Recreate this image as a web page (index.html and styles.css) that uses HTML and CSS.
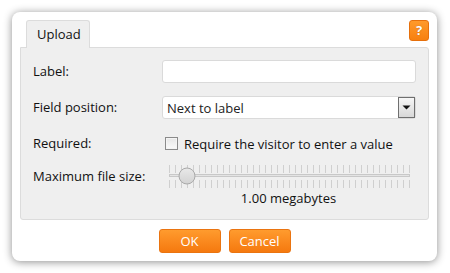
FILE: index.html
```html
<!DOCTYPE html>
<html>
<head>
<meta charset="utf-8">
<link rel="stylesheet" href="styles.css">
</head>
<body>
<div class="dialog">
  <div class="tabbar">
    <div class="tab">Upload</div>
    <div class="help">?</div>
  </div>
  <div class="panel">
    <div class="row r1">
      <div class="lbl">Label:</div>
      <div class="input"></div>
    </div>
    <div class="row r2">
      <div class="lbl">Field position:</div>
      <div class="select"><span class="sel-text">Next to label</span><span class="sel-btn"><svg width="9" height="5" viewBox="0 0 9 5"><path d="M0.5 0.5h8l-4 4z" fill="#111"/></svg></span></div>
    </div>
    <div class="row r3">
      <div class="lbl">Required:</div>
      <label class="check"><span class="box"></span><span>Require the visitor to enter a value</span></label>
    </div>
    <div class="row r4">
      <div class="lbl">Maximum file size:</div>
      <div class="slider">
        <svg width="250" height="24" viewBox="0 0 250 24">
          <g id="ticks" stroke="#cfcfcf" stroke-width="1"></g>
          <rect x="1.5" y="10.5" width="240" height="2" fill="#e4e4e4" stroke="#c8c8c8" stroke-width="1"/>
          <circle cx="19" cy="12" r="8" fill="url(#tg)" stroke="#a9a9a9" stroke-width="1"/>
          <defs>
            <linearGradient id="tg" x1="0" y1="0" x2="0" y2="1">
              <stop offset="0" stop-color="#e9e9e9"/>
              <stop offset="1" stop-color="#d2d2d2"/>
            </linearGradient>
          </defs>
        </svg>
      </div>
    </div>
    <div class="row r5">
      <div></div>
      <div class="size">1.00 megabytes</div>
    </div>
  </div>
  <div class="actions">
    <button class="btn">OK</button>
    <button class="btn">Cancel</button>
  </div>
</div>
<script>
  var g = document.getElementById('ticks');
  var s = '';
  for (var i = 0; i <= 40; i++) {
    var x = 1.5 + i * 6;
    s += '<line x1="' + x + '" y1="1" x2="' + x + '" y2="9"/>';
    s += '<line x1="' + x + '" y1="16" x2="' + x + '" y2="24"/>';
  }
  g.innerHTML = s;
</script>
</body>
</html>
```

FILE: styles.css
```css
html, body {
  margin: 0;
  padding: 0;
  background: #fff;
}
body {
  font-family: "Open Sans", "DejaVu Sans", sans-serif;
  font-size: 12px;
  color: #111;
}
.dialog {
  margin: 12px;
  width: 425px;
  height: 249px;
  box-sizing: border-box;
  background: #fff;
  border-radius: 8px;
  box-shadow: 0 1px 9px rgba(0, 0, 0, 0.45);
  padding: 8px 8px 0 8px;
  display: flex;
  flex-direction: column;
}
.tabbar {
  display: flex;
  align-items: flex-start;
  padding-left: 6px;
  height: 27px;
}
.tab {
  position: relative;
  z-index: 1;
  box-sizing: border-box;
  height: 28px;
  width: 64px;
  border: 1px solid #dcdcdc;
  border-bottom: none;
  border-radius: 3px 3px 0 0;
  background: #efefef;
  padding-left: 10px;
  line-height: 26px;
  font-size: 13px;
}
.help {
  margin-left: auto;
  width: 20px;
  height: 21px;
  box-sizing: border-box;
  border: 1px solid #e6700c;
  border-radius: 3px;
  background: linear-gradient(#ff9a2c, #f7800f);
  color: #fff;
  font-weight: bold;
  font-size: 13px;
  text-align: center;
  line-height: 19px;
  text-shadow: 0 0 1px rgba(120, 50, 0, 0.6);
}
.panel {
  height: 173px;
  box-sizing: border-box;
  border: 1px solid #dcdcdc;
  border-radius: 0 3px 3px 3px;
  background: #efefef;
  padding: 12px 12px 0 12px;
}
.row {
  display: grid;
  grid-template-columns: 129px 1fr;
  align-items: center;
}
.r1 { height: 23px; }
.r2 { height: 23px; margin-top: 13px; }
.r3 { height: 23px; margin-top: 13px; }
.r4 { height: 24px; margin-top: 9px; }
.r5 { height: 17px; margin-top: 2px; }
.lbl {
  font-size: 13px;
  line-height: 17px;
}
.input {
  height: 23px;
  box-sizing: border-box;
  border: 1px solid #dadada;
  border-radius: 3px;
  background: #fff;
}
.select {
  height: 23px;
  box-sizing: border-box;
  border: 1px solid #dadada;
  border-radius: 3px;
  background: #fff;
  display: flex;
  align-items: center;
  padding-left: 4px;
}
.sel-text {
  flex: 1;
  font-size: 13px;
  color: #222;
}
.sel-btn {
  width: 17px;
  height: 21px;
  box-sizing: border-box;
  border: 1px solid #6f6f6f;
  background: linear-gradient(#f6f6f6, #d8d8d8);
  display: flex;
  align-items: center;
  justify-content: center;
}
.check {
  display: flex;
  align-items: center;
  font-size: 13px;
  padding-left: 3px;
}
.box {
  width: 13px;
  height: 13px;
  box-sizing: border-box;
  border: 1px solid #8a8a8a;
  background: linear-gradient(#e6e6e6, #fafafa);
  margin-right: 6px;
  box-shadow: inset 0 0 0 1px #f4f4f4;
}
.slider {
  height: 24px;
  padding-left: 6px;
  display: flex;
  align-items: center;
}
.slider svg { display: block; }
.size {
  text-align: center;
  font-size: 13px;
  line-height: 17px;
  padding-right: 1px;
}
.actions {
  display: flex;
  justify-content: center;
  gap: 8px;
  padding-top: 9px;
}
.btn {
  width: 62px;
  height: 24px;
  box-sizing: border-box;
  border: 1px solid #ea7410;
  border-radius: 3px;
  background: linear-gradient(#ff9b2e, #f5790f);
  color: #fff;
  font-family: "Open Sans", "DejaVu Sans", sans-serif;
  font-size: 13px;
  padding: 0;
  line-height: 20px;
}
```
